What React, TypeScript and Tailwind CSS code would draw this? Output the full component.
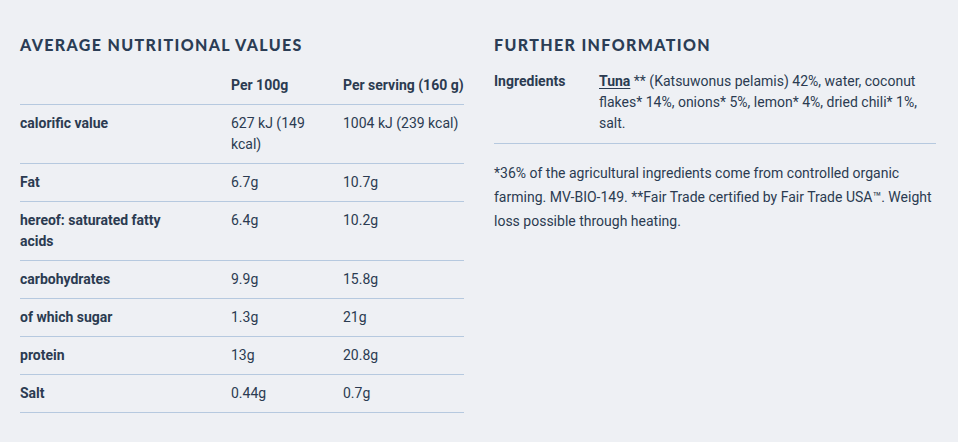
const rows = [
  { label: "calorific value", a: "627 kJ (149 kcal)", b: "1004 kJ (239 kcal)" },
  { label: "Fat", a: "6.7g", b: "10.7g" },
  { label: "hereof: saturated fatty acids", a: "6.4g", b: "10.2g" },
  { label: "carbohydrates", a: "9.9g", b: "15.8g" },
  { label: "of which sugar", a: "1.3g", b: "21g" },
  { label: "protein", a: "13g", b: "20.8g" },
  { label: "Salt", a: "0.44g", b: "0.7g" },
];

const font = { fontFamily: "Roboto, 'Liberation Sans', sans-serif" };

function Heading({ children }: { children: React.ReactNode }) {
  return (
    <h2 className="text-[16px] leading-[20px] font-black uppercase tracking-[0.085em] text-[#2b3d55]" style={{ fontFamily: "Lato, 'Open Sans', sans-serif" }}>
      {children}
    </h2>
  );
}

export default function App() {
  return (
    <div className="h-[442px] w-[958px] bg-[#eef0f4] text-[#2b3b51]" style={font}>
      <div className="flex gap-[30px] px-[20px] pt-[35px]">
        <section className="w-[444px]">
          <Heading>Average nutritional values</Heading>
          <div className="mt-[12px] text-[14px] leading-[21px]">
            <div className="grid grid-cols-[211px_112px_1fr] border-b border-[#b6c9df] py-[8px] font-bold">
              <div />
              <div>Per 100g</div>
              <div className="whitespace-nowrap">Per serving (160 g)</div>
            </div>
            {rows.map((r) => (
              <div key={r.label} className="grid grid-cols-[211px_112px_1fr] border-b border-[#b6c9df] py-[8px]">
                <div className="pr-[45px] font-bold">{r.label}</div>
                <div className="pr-[14px]">{r.a}</div>
                <div className="whitespace-nowrap">{r.b}</div>
              </div>
            ))}
          </div>
        </section>

        <section className="w-[442px]">
          <Heading>Further information</Heading>
          <div className="mt-[16px] text-[14px] leading-[21px]">
            <div className="flex border-b border-[#b6c9df] pb-[9px]">
              <div className="w-[105px] shrink-0 font-bold">Ingredients</div>
              <p className="pr-[6px]">
                <span className="font-bold underline underline-offset-2">Tuna</span> ** (Katsuwonus pelamis) 42%, water, coconut flakes* 14%, onions* 5%, lemon* 4%, dried chili* 1%, salt.
              </p>
            </div>
            <p className="mt-[17px] leading-[24px]">
              *36% of the agricultural ingredients come from controlled organic farming. MV-BIO-149. **Fair Trade certified by Fair Trade USA™. Weight loss possible through heating.
            </p>
          </div>
        </section>
      </div>
    </div>
  );
}
